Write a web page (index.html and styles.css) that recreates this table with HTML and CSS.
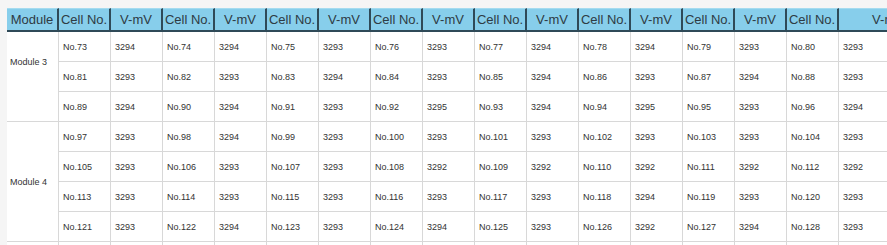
FILE: index.html
```html
<!DOCTYPE html>
<html>
<head>
<meta charset="utf-8">
<title>Cell Voltages</title>
<link rel="stylesheet" href="styles.css">
</head>
<body>
<div class="wrap">
<table class="grid">
<thead>
<tr>
<th class="c-mod">Module</th>
<th>Cell No.</th><th>V-mV</th>
<th>Cell No.</th><th>V-mV</th>
<th>Cell No.</th><th>V-mV</th>
<th>Cell No.</th><th>V-mV</th>
<th>Cell No.</th><th>V-mV</th>
<th>Cell No.</th><th>V-mV</th>
<th>Cell No.</th><th>V-mV</th>
<th>Cell No.</th><th class="c-last">V-mV</th>
</tr>
</thead>
<tbody>
<tr>
<td class="mod mod-shift" rowspan="3">Module 3</td>
<td>No.73</td><td>3294</td><td>No.74</td><td>3294</td><td>No.75</td><td>3293</td><td>No.76</td><td>3293</td>
<td>No.77</td><td>3294</td><td>No.78</td><td>3294</td><td>No.79</td><td>3293</td><td>No.80</td><td>3293</td>
</tr>
<tr>
<td>No.81</td><td>3293</td><td>No.82</td><td>3293</td><td>No.83</td><td>3294</td><td>No.84</td><td>3293</td>
<td>No.85</td><td>3294</td><td>No.86</td><td>3293</td><td>No.87</td><td>3294</td><td>No.88</td><td>3293</td>
</tr>
<tr>
<td>No.89</td><td>3294</td><td>No.90</td><td>3294</td><td>No.91</td><td>3293</td><td>No.92</td><td>3295</td>
<td>No.93</td><td>3294</td><td>No.94</td><td>3295</td><td>No.95</td><td>3293</td><td>No.96</td><td>3294</td>
</tr>
<tr>
<td class="mod" rowspan="4">Module 4</td>
<td>No.97</td><td>3293</td><td>No.98</td><td>3294</td><td>No.99</td><td>3293</td><td>No.100</td><td>3293</td>
<td>No.101</td><td>3293</td><td>No.102</td><td>3293</td><td>No.103</td><td>3293</td><td>No.104</td><td>3293</td>
</tr>
<tr>
<td>No.105</td><td>3293</td><td>No.106</td><td>3293</td><td>No.107</td><td>3293</td><td>No.108</td><td>3292</td>
<td>No.109</td><td>3292</td><td>No.110</td><td>3292</td><td>No.111</td><td>3292</td><td>No.112</td><td>3292</td>
</tr>
<tr>
<td>No.113</td><td>3293</td><td>No.114</td><td>3293</td><td>No.115</td><td>3293</td><td>No.116</td><td>3293</td>
<td>No.117</td><td>3293</td><td>No.118</td><td>3294</td><td>No.119</td><td>3293</td><td>No.120</td><td>3293</td>
</tr>
<tr>
<td>No.121</td><td>3293</td><td>No.122</td><td>3294</td><td>No.123</td><td>3293</td><td>No.124</td><td>3294</td>
<td>No.125</td><td>3293</td><td>No.126</td><td>3292</td><td>No.127</td><td>3294</td><td>No.128</td><td>3293</td>
</tr>
<tr class="next">
<td></td><td></td><td></td><td></td><td></td><td></td><td></td><td></td><td></td>
<td></td><td></td><td></td><td></td><td></td><td></td><td></td><td></td>
</tr>
</tbody>
</table>
</div>
</body>
</html>
```
FILE: styles.css
```css
html, body {
  margin: 0;
  padding: 0;
  background: #f5f5f5;
  width: 887px;
  height: 245px;
  overflow: hidden;
}

.wrap {
  padding: 8px 0 0 7px;
}

.grid {
  border-collapse: separate;
  border-spacing: 0;
  table-layout: fixed;
  width: 932px;
  background: #ffffff;
  font-family: "Liberation Sans", Arial, sans-serif;
  color: #333333;
}

.grid th {
  box-sizing: border-box;
  width: 52px;
  height: 24px;
  padding: 0;
  background: #87ceeb;
  color: #2e3b44;
  font-size: 13px;
  font-weight: normal;
  text-align: center;
  white-space: nowrap;
  overflow: hidden;
  border-top: 1px solid #a4dbef;
  border-right: 2px solid #2f4a58;
  border-bottom: 2px solid #2f4a58;
}

.grid th.c-mod {
  width: 52px;
}

.grid th.c-last {
  width: 100px;
}

.grid td {
  box-sizing: border-box;
  height: 30px;
  padding: 0 0 0 4px;
  font-size: 9px;
  white-space: nowrap;
  vertical-align: middle;
  border-right: 1px solid #d8d8d8;
  border-bottom: 1px solid #d8d8d8;
}

.grid td.mod {
  padding-left: 3px;
}

.grid td.mod-shift {
  padding-bottom: 30px;
}
```
